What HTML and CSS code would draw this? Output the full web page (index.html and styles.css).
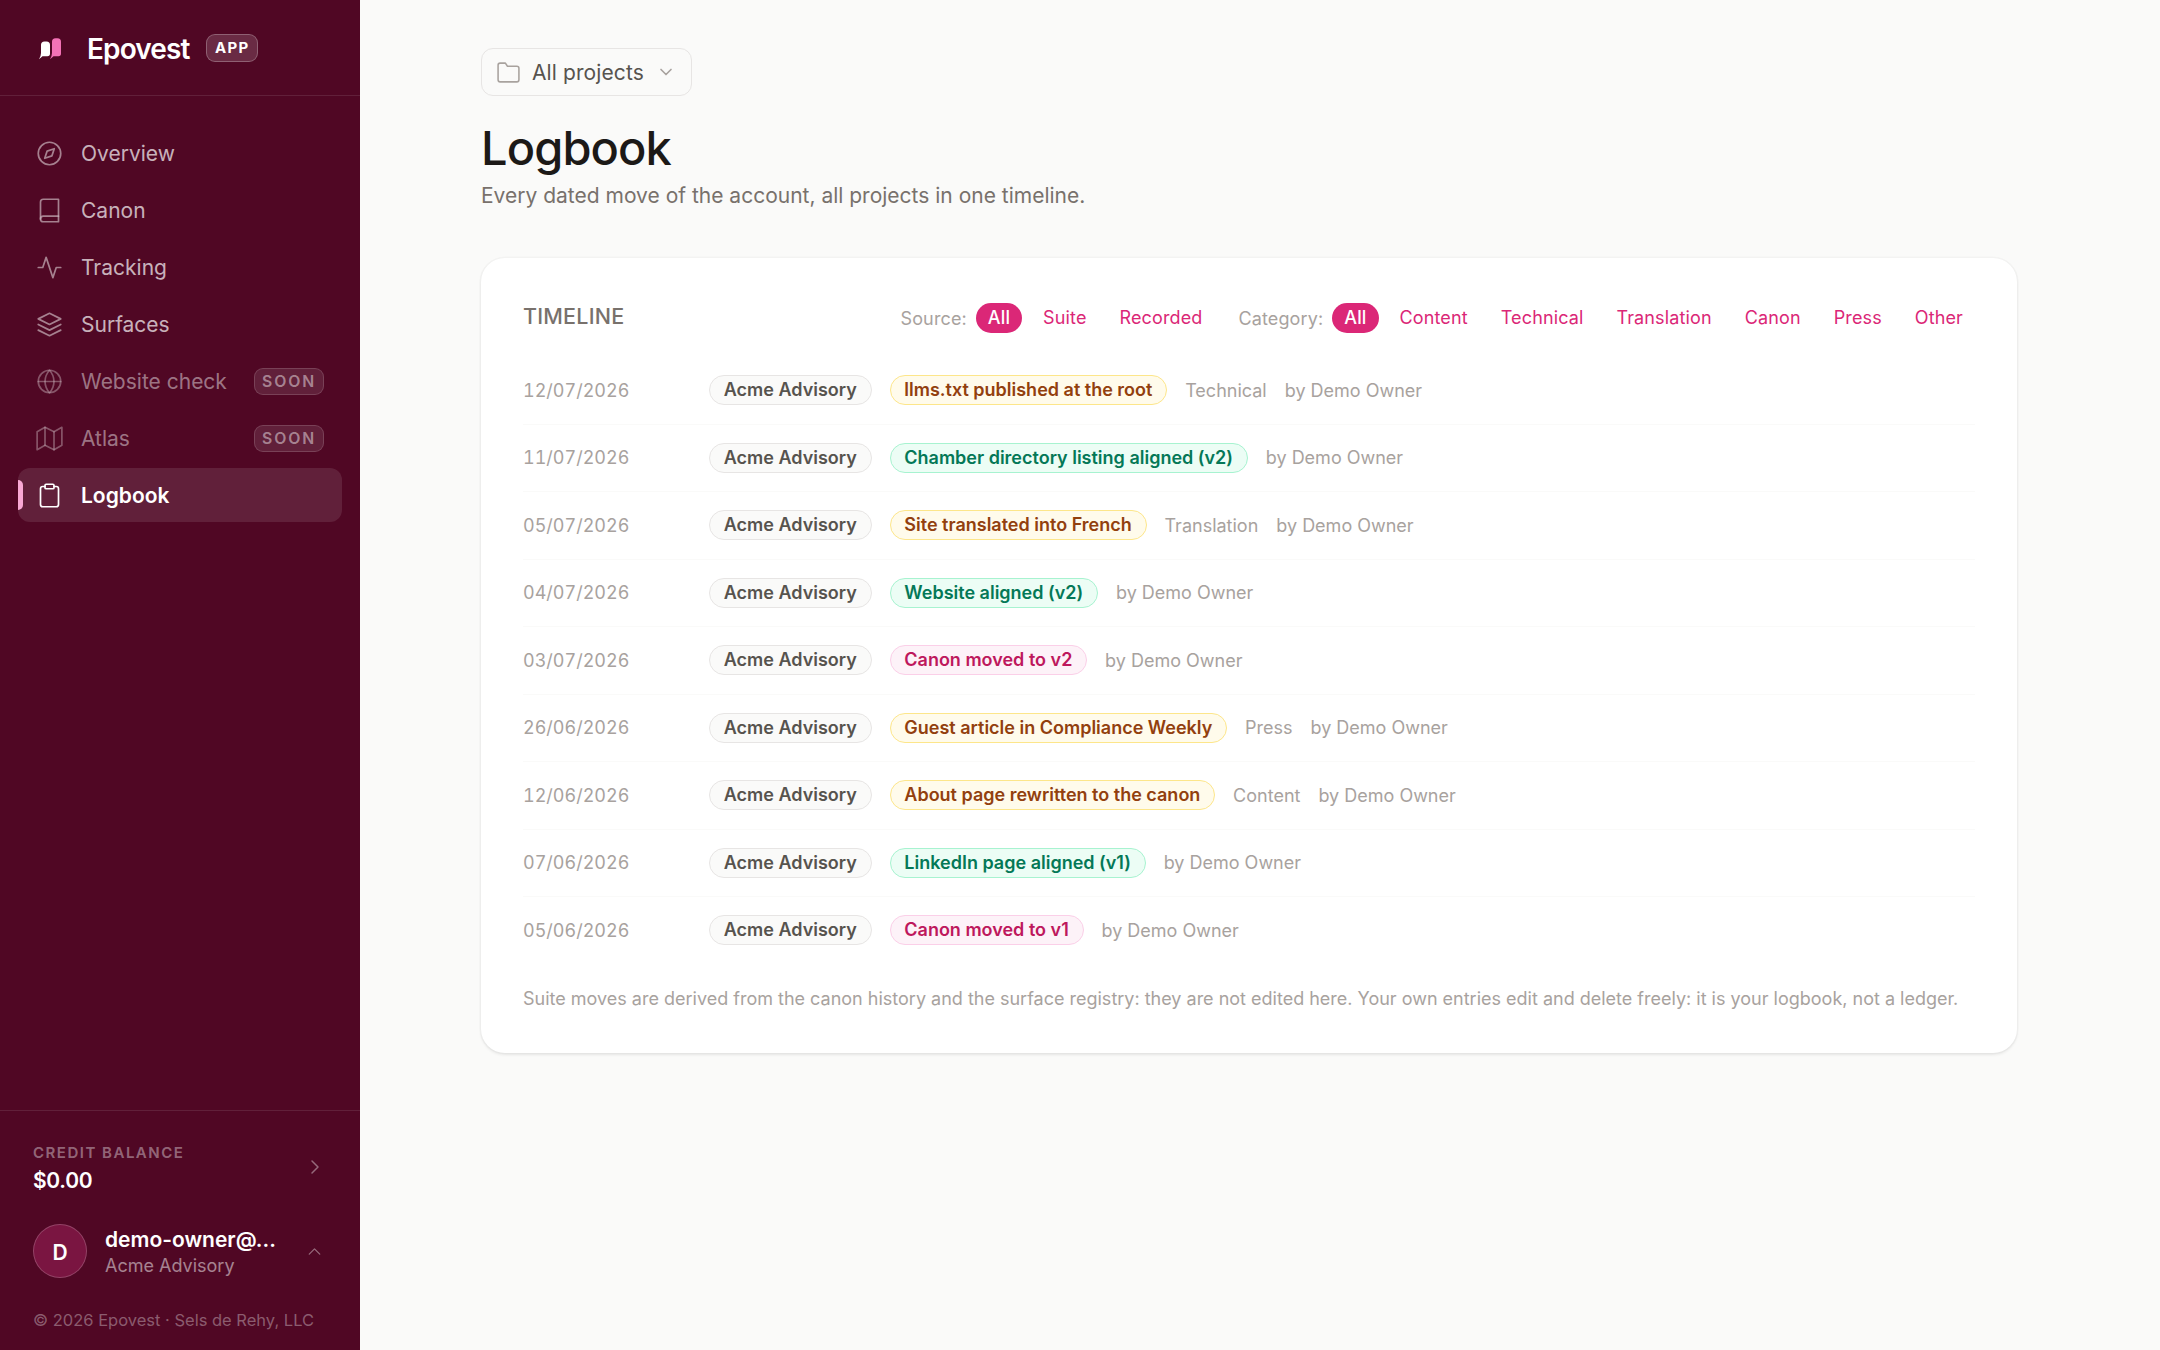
FILE: index.html
```
<!DOCTYPE html>
<html lang="en">
<head>
    <meta charset="UTF-8">
    <meta name="viewport" content="width=device-width, initial-scale=1.0">
    <title>Logbook - Epovest</title>
    <link rel="stylesheet" href="styles.css">
</head>
<body>
<div class="app">

    <!-- Sidebar -->
    <aside class="sidebar">
        <div class="brand">
            <svg class="brand-logo" viewBox="0 0 36 36">
                <path fill="#fff" d="M5 15Q5 11.500 8.500 11.500H10.500Q14 11.500 14 15V23.500Q14 26.200 11.500 26.200H6.500L3 29.300Q5 26 5 23Z"/>
                <path fill="#f472b6" d="M16 11.700Q16 8.200 19.500 8.200H21.500Q25 8.200 25 11.700V23.500Q25 26.200 22.500 26.200H17.500L14 29.300Q16 26 16 23Z"/>
            </svg>
            <span class="brand-name">Epovest</span>
            <span class="brand-tag">APP</span>
        </div>

        <nav class="nav">
            <a class="nav-item">
                <svg class="icon" viewBox="0 0 24 24"><circle cx="12" cy="12" r="10"/><path d="M16.24 7.76l-2.12 6.36-6.36 2.12 2.12-6.36z"/></svg>
                <span>Overview</span>
            </a>
            <a class="nav-item">
                <svg class="icon" viewBox="0 0 24 24"><path d="M4 19.5A2.5 2.5 0 0 1 6.500 17H20"/><path d="M6.500 2H20v20H6.500A2.500 2.500 0 0 1 4 19.500v-15A2.500 2.500 0 0 1 6.500 2z"/></svg>
                <span>Canon</span>
            </a>
            <a class="nav-item">
                <svg class="icon" viewBox="0 0 24 24"><path d="M22 12h-4l-3 9L9 3l-3 9H2"/></svg>
                <span>Tracking</span>
            </a>
            <a class="nav-item">
                <svg class="icon" viewBox="0 0 24 24"><path d="M12 2L2 7l10 5 10-5-10-5z"/><path d="M2 17l10 5 10-5"/><path d="M2 12l10 5 10-5"/></svg>
                <span>Surfaces</span>
            </a>
            <a class="nav-item disabled">
                <svg class="icon" viewBox="0 0 24 24"><circle cx="12" cy="12" r="10"/><path d="M2 12h20"/><path d="M12 2a15.300 15.300 0 0 1 4 10 15.300 15.300 0 0 1-4 10 15.300 15.300 0 0 1-4-10 15.300 15.300 0 0 1 4-10z"/></svg>
                <span>Website check</span>
                <span class="soon">SOON</span>
            </a>
            <a class="nav-item disabled">
                <svg class="icon" viewBox="0 0 24 24"><path d="M1 6v16l7-4 8 4 7-4V2l-7 4-8-4-7 4z"/><path d="M8 2v16"/><path d="M16 6v16"/></svg>
                <span>Atlas</span>
                <span class="soon">SOON</span>
            </a>
            <a class="nav-item active">
                <svg class="icon" viewBox="0 0 24 24"><path d="M16 4h2a2 2 0 0 1 2 2v14a2 2 0 0 1-2 2H6a2 2 0 0 1-2-2V6a2 2 0 0 1 2-2h2"/><rect x="8" y="2" width="8" height="4" rx="1"/></svg>
                <span>Logbook</span>
            </a>
        </nav>

        <div class="side-foot">
            <div class="credit">
                <div>
                    <div class="credit-label">CREDIT BALANCE</div>
                    <div class="credit-value">$0.00</div>
                </div>
                <svg class="chevron" viewBox="0 0 24 24"><path d="M9 18l6-6-6-6"/></svg>
            </div>
            <div class="user">
                <div class="avatar">D</div>
                <div class="user-text">
                    <div class="user-name">demo-owner@...</div>
                    <div class="user-org">Acme Advisory</div>
                </div>
                <svg class="chevron small" viewBox="0 0 24 24"><path d="M18 15l-6-6-6 6"/></svg>
            </div>
            <div class="copyright">© 2026 Epovest · Sels de Rehy, LLC</div>
        </div>
    </aside>

    <!-- Page -->
    <main class="main">
        <div class="container">
            <button class="project-picker" type="button">
                <svg class="picker-icon" viewBox="0 0 24 24"><path d="M22 19a2 2 0 0 1-2 2H4a2 2 0 0 1-2-2V5a2 2 0 0 1 2-2h5l2 3h9a2 2 0 0 1 2 2z"/></svg>
                <span>All projects</span>
                <svg class="picker-arrow" viewBox="0 0 24 24"><path d="M6 9l6 6 6-6"/></svg>
            </button>

            <h1 class="title">Logbook</h1>
            <p class="subtitle">Every dated move of the account, all projects in one timeline.</p>

            <section class="card">
                <div class="card-head">
                    <h2 class="card-title">TIMELINE</h2>
                    <div class="filters">
                        <div class="filter-group">
                            <span class="filter-label">Source:</span>
                            <a class="filter on">All</a>
                            <a class="filter">Suite</a>
                            <a class="filter">Recorded</a>
                        </div>
                        <div class="filter-group">
                            <span class="filter-label">Category:</span>
                            <a class="filter on">All</a>
                            <a class="filter">Content</a>
                            <a class="filter">Technical</a>
                            <a class="filter">Translation</a>
                            <a class="filter">Canon</a>
                            <a class="filter">Press</a>
                            <a class="filter">Other</a>
                        </div>
                    </div>
                </div>

                <ul class="timeline">
                    <li class="row">
                        <span class="date">12/07/2026</span>
                        <span class="pill">Acme Advisory</span>
                        <span class="pill amber">llms.txt published at the root</span>
                        <span class="meta">Technical</span>
                        <span class="meta">by Demo Owner</span>
                    </li>
                    <li class="row">
                        <span class="date">11/07/2026</span>
                        <span class="pill">Acme Advisory</span>
                        <span class="pill green">Chamber directory listing aligned (v2)</span>
                        <span class="meta">by Demo Owner</span>
                    </li>
                    <li class="row">
                        <span class="date">05/07/2026</span>
                        <span class="pill">Acme Advisory</span>
                        <span class="pill amber">Site translated into French</span>
                        <span class="meta">Translation</span>
                        <span class="meta">by Demo Owner</span>
                    </li>
                    <li class="row">
                        <span class="date">04/07/2026</span>
                        <span class="pill">Acme Advisory</span>
                        <span class="pill green">Website aligned (v2)</span>
                        <span class="meta">by Demo Owner</span>
                    </li>
                    <li class="row">
                        <span class="date">03/07/2026</span>
                        <span class="pill">Acme Advisory</span>
                        <span class="pill pink">Canon moved to v2</span>
                        <span class="meta">by Demo Owner</span>
                    </li>
                    <li class="row">
                        <span class="date">26/06/2026</span>
                        <span class="pill">Acme Advisory</span>
                        <span class="pill amber">Guest article in Compliance Weekly</span>
                        <span class="meta">Press</span>
                        <span class="meta">by Demo Owner</span>
                    </li>
                    <li class="row">
                        <span class="date">12/06/2026</span>
                        <span class="pill">Acme Advisory</span>
                        <span class="pill amber">About page rewritten to the canon</span>
                        <span class="meta">Content</span>
                        <span class="meta">by Demo Owner</span>
                    </li>
                    <li class="row">
                        <span class="date">07/06/2026</span>
                        <span class="pill">Acme Advisory</span>
                        <span class="pill green">LinkedIn page aligned (v1)</span>
                        <span class="meta">by Demo Owner</span>
                    </li>
                    <li class="row">
                        <span class="date">05/06/2026</span>
                        <span class="pill">Acme Advisory</span>
                        <span class="pill pink">Canon moved to v1</span>
                        <span class="meta">by Demo Owner</span>
                    </li>
                </ul>

                <p class="note">Suite moves are derived from the canon history and the surface registry: they are not edited here. Your own entries edit and delete freely: it is your logbook, not a ledger.</p>
            </section>
        </div>
    </main>
</div>
</body>
</html>
```
FILE: styles.css
```
* {
    box-sizing: border-box;
}

body {
    margin: 0;
    background: #fafaf9;
    color: #1c1917;
    font-family: Inter, "Liberation Sans", sans-serif;
    font-size: 18px;
}

h1, h2, p, ul {
    margin: 0;
    padding: 0;
}

svg {
    display: block;
    flex: none;
    fill: none;
    stroke: currentColor;
    stroke-width: 1.5;
    stroke-linecap: round;
    stroke-linejoin: round;
}

.app {
    display: flex;
    height: 1350px;
}

/* Sidebar */
.sidebar {
    display: flex;
    flex-direction: column;
    flex: none;
    width: 360px;
    background: #500724;
    color: #fff;
}

.brand {
    display: flex;
    align-items: center;
    height: 96px;
    padding: 0 36px;
    border-bottom: 1px solid rgba(255, 255, 255, 0.1);
}

.brand-logo {
    width: 36px;
    height: 36px;
    stroke: none;
}

.brand-name {
    width: 103px;
    margin-left: 15px;
    padding-top: 3px;
    font-weight: 600;
    font-size: 28px;
    line-height: 36px;
    letter-spacing: -0.9px;
}

.brand-tag {
    margin-left: 16px;
    padding: 0 7px 0 8px;
    border: 1px solid rgba(255, 255, 255, 0.25);
    border-radius: 9px;
    background: rgba(255, 255, 255, 0.15);
    font-weight: 700;
    font-size: 15px;
    line-height: 26px;
    letter-spacing: 1.3px;
}

.nav {
    display: flex;
    flex-direction: column;
    gap: 3px;
    flex: 1;
    padding: 30px 18px;
}

.nav-item {
    display: flex;
    align-items: center;
    position: relative;
    gap: 18px;
    height: 54px;
    padding: 0 18px;
    border-radius: 12px;
    color: rgba(255, 255, 255, 0.7);
    font-size: 21px;
}

.icon {
    width: 27px;
    height: 27px;
    opacity: 0.7;
}

.nav-item.disabled {
    color: rgba(255, 255, 255, 0.45);
}

.nav-item.active {
    background: rgba(255, 255, 255, 0.1);
    color: #fff;
    font-weight: 600;
}

.nav-item.active .icon {
    opacity: 1;
}

.nav-item.active::before {
    content: "";
    position: absolute;
    left: 0;
    top: 12px;
    width: 5px;
    height: 30px;
    border-radius: 0 5px 5px 0;
    background: #f9a8d4;
}

.soon {
    margin-left: auto;
    padding: 0 7px;
    border: 1px solid rgba(255, 255, 255, 0.15);
    border-radius: 9px;
    background: rgba(255, 255, 255, 0.1);
    font-weight: 600;
    font-size: 15.75px;
    line-height: 25px;
    letter-spacing: 1.9px;
}

.side-foot {
    height: 240px;
    padding: 30px 36px 0 33px;
    border-top: 1px solid rgba(255, 255, 255, 0.1);
}

.credit {
    display: flex;
    align-items: center;
    justify-content: space-between;
}

.credit-label {
    color: rgba(255, 255, 255, 0.4);
    font-size: 15px;
    font-weight: 600;
    line-height: 24px;
    letter-spacing: 1.5px;
}

.credit-value {
    font-size: 21px;
    font-weight: 600;
    line-height: 31px;
    letter-spacing: -0.3px;
}

.chevron {
    width: 24px;
    height: 24px;
    margin: 0 -3px 3px 0;
    color: rgba(255, 255, 255, 0.4);
}

.chevron.small {
    width: 21px;
    height: 21px;
    margin: 0 -1px 0 0;
}

.user {
    display: flex;
    align-items: center;
    gap: 18px;
    margin-top: 28px;
}

.avatar {
    display: flex;
    align-items: center;
    justify-content: center;
    width: 54px;
    height: 54px;
    padding-top: 2px;
    border: 1px solid rgba(255, 255, 255, 0.2);
    border-radius: 50%;
    background: #7a1541;
    font-size: 21px;
    font-weight: 600;
}

.user-text {
    flex: 1;
    padding-top: 2px;
}

.user-name {
    font-size: 21px;
    font-weight: 600;
    line-height: 27px;
}

.user-org {
    color: rgba(255, 255, 255, 0.5);
    font-size: 18px;
    line-height: 25px;
}

.copyright {
    margin-top: 30px;
    color: rgba(255, 255, 255, 0.35);
    font-size: 16.5px;
    line-height: 24px;
    white-space: nowrap;
}

/* Page */
.main {
    flex: 1;
    padding: 48px 22px 0 0;
}

.container {
    width: 1536px;
    margin: 0 auto;
}

.project-picker {
    display: flex;
    align-items: center;
    height: 48px;
    padding: 0 15px 0 14px;
    border: 1px solid #e7e5e4;
    border-radius: 12px;
    background: transparent;
    color: #57534e;
    font-family: inherit;
    font-size: 21px;
    letter-spacing: 0.1px;
}

.picker-icon {
    width: 25px;
    height: 25px;
    margin-right: 11px;
    color: #a8a29e;
}

.picker-arrow {
    width: 20px;
    height: 20px;
    margin-left: 12px;
    stroke-width: 2;
    color: #a8a29e;
}

.title {
    margin-top: 25px;
    font-size: 47px;
    font-weight: 500;
    line-height: 54px;
    letter-spacing: -0.9px;
}

.subtitle {
    margin-top: 6px;
    color: #78716c;
    font-size: 21px;
    line-height: 30px;
}

.card {
    margin-top: 47px;
    padding: 42px;
    border-radius: 24px;
    background: #fff;
    box-shadow: 0 0 0 1.5px rgba(28, 25, 23, 0.025), 0 1.5px 3px rgba(28, 25, 23, 0.08);
}

.card-head {
    display: flex;
    justify-content: space-between;
    height: 33px;
}

.card-title {
    color: #78716c;
    font-size: 21.5px;
    font-weight: 500;
    line-height: 33px;
    letter-spacing: 0.2px;
}

.filters {
    display: flex;
    gap: 24px;
    padding-top: 3px;
    letter-spacing: 0.13px;
}

.filter-group {
    display: flex;
    align-items: center;
    gap: 9px;
}

.filter-label {
    color: #a8a29e;
}

.filter {
    padding: 0 12px;
    border-radius: 15px;
    color: #db2777;
    line-height: 30px;
}

.filter.on {
    background: #db2777;
    color: #fff;
    font-weight: 500;
}

.timeline {
    margin-top: 24px;
    list-style: none;
}

.row {
    display: flex;
    align-items: center;
    gap: 18px;
    height: 67.5px;
    border-bottom: 1px solid #fafaf9;
}

.row:last-child {
    height: 66px;
    border-bottom: none;
}

.date {
    width: 168px;
    color: #a8a29e;
    font-variant-numeric: tabular-nums;
}

.pill {
    padding: 0 13.75px;
    border: 1px solid #e7e5e4;
    border-radius: 15px;
    background: #fafaf9;
    color: #57534e;
    font-weight: 600;
    line-height: 28px;
}

.pill.amber {
    border-color: #fde68a;
    background: #fffbeb;
    color: #92400e;
}

.pill.green {
    border-color: #a7f3d0;
    background: #ecfdf5;
    color: #047857;
}

.pill.pink {
    border-color: #fbcfe8;
    background: #fdf2f8;
    color: #be185d;
}

.meta {
    color: #a8a29e;
}

.note {
    margin-top: 24px;
    color: #a8a29e;
    line-height: 24px;
    white-space: nowrap;
}
```
